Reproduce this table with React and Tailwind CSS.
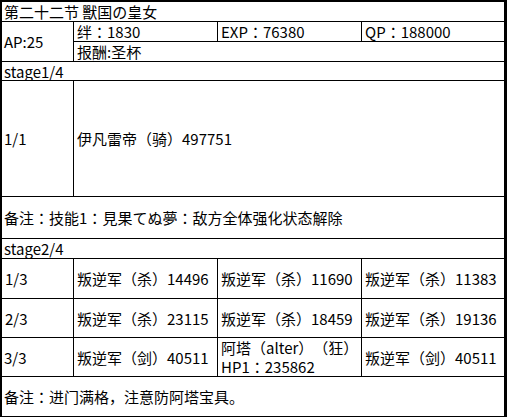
import React from "react";

const rows = [
  ["1/3", "叛逆军（杀）14496", "叛逆军（杀）11690", "叛逆军（杀）11383"],
  ["2/3", "叛逆军（杀）23115", "叛逆军（杀）18459", "叛逆军（杀）19136"],
];

// YaHei-style centred colon
const C = () => <span className="font-['Noto_Sans_CJK_JP']">：</span>;

function Cell({ className = "", children }) {
  return (
    <div className={`flex items-center border-b border-black pl-[2px] overflow-hidden whitespace-nowrap ${className}`}>
      {children}
    </div>
  );
}

export default function App() {
  return (
    <div
      className="w-[507px] h-[418px] bg-white text-black text-[15px] leading-[19px] [text-spacing-trim:space-all]"
      style={{ fontFamily: '"Noto Sans CJK SC", "Noto Sans", sans-serif' }}
    >
      <div className="border-t-2 border-l-2 border-r-[3px] border-black grid grid-cols-[72px_144px_144px_142px] grid-rows-[20px_20px_20px_19px_116px_42px_20px_40px_39px_39px_40px]">
        {/* header */}
        <Cell className="col-span-4">第二十二节 獸国の皇女</Cell>

        <Cell className="row-span-2 border-r">AP:25</Cell>
        <Cell className="border-r pl-[3px]">绊<C />1830</Cell>
        <Cell className="border-r pl-[3px]">EXP<C />76380</Cell>
        <Cell className="pl-[3px]">QP<C />188000</Cell>
        <Cell className="col-span-3 pl-[3px]">报酬:圣杯</Cell>

        {/* stage 1 */}
        <Cell className="col-span-4">stage1/4</Cell>
        <Cell className="border-r">1/1</Cell>
        <Cell className="col-span-3 pl-[3px]">伊凡雷帝（骑）497751</Cell>
        <Cell className="col-span-4">
          备注<C />技能1<C />見果てぬ夢<C />敌方全体强化状态解除
        </Cell>

        {/* stage 2 */}
        <Cell className="col-span-4">stage2/4</Cell>
        {rows.map((r) =>
          r.map((t, i) => (
            <Cell key={r[0] + i} className={i < 3 ? "border-r pl-[3px]" : "pl-[3px]"}>
              {t}
            </Cell>
          ))
        )}
        <Cell className="border-r">3/3</Cell>
        <Cell className="border-r pl-[3px]">叛逆军（剑）40511</Cell>
        <Cell className="border-r pl-[3px] whitespace-normal">
          <span>
            阿塔（alter）（狂）
            <br />
            HP1<C />235862
          </span>
        </Cell>
        <Cell className="pl-[3px]">叛逆军（剑）40511</Cell>
        <Cell className="col-span-4">备注<C />进门满格，注意防阿塔宝具。</Cell>
      </div>
    </div>
  );
}
